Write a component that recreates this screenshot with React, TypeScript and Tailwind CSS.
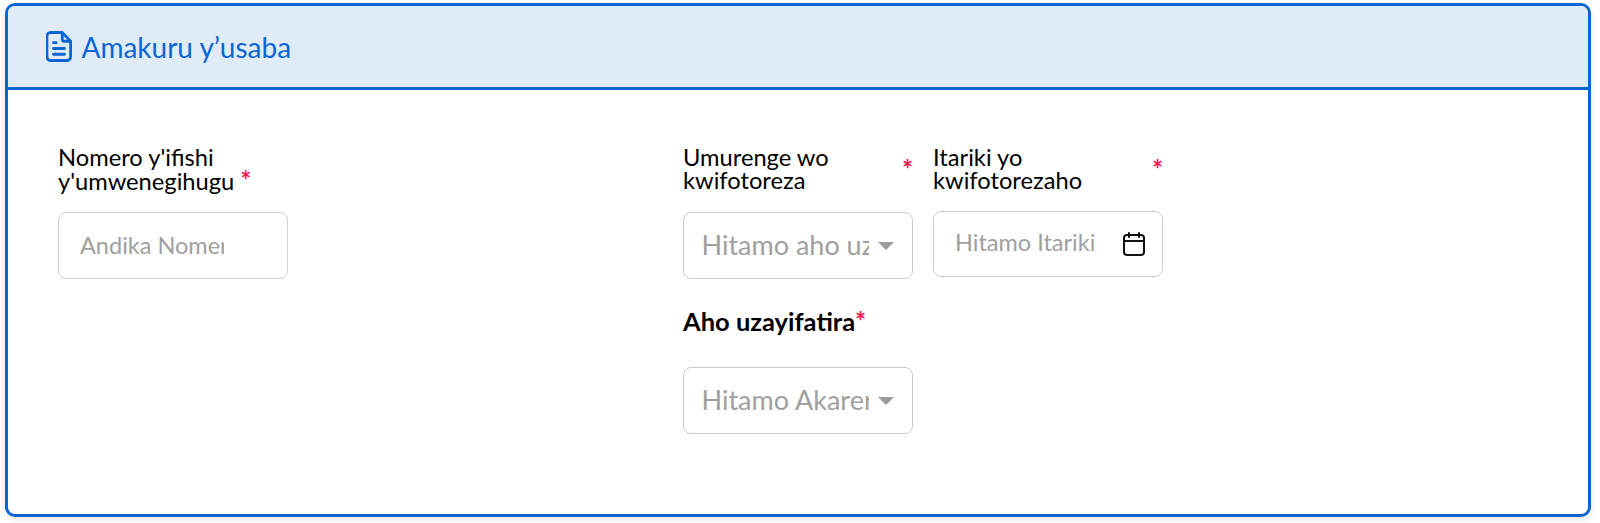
import React from "react";

function Star({ className = "" }: { className?: string }) {
  return <span className={"font-bold text-[#f5174f] text-[26px] leading-[23px] " + className}>*</span>;
}

function Caret() {
  return (
    <svg width="16" height="8" viewBox="0 0 16 8" className="absolute right-[18px] top-[29px]" aria-hidden>
      <path d="M0 0h16L8 8z" fill="#9b9b9b" />
    </svg>
  );
}

function Select({ placeholder }: { placeholder: string }) {
  return (
    <div className="relative h-[67px] w-[230px] rounded-[8px] border-[1.5px] border-[#cbcbce] bg-white">
      <input
        readOnly
        placeholder={placeholder}
        className="h-full w-full rounded-[8px] bg-transparent pb-[2px] pl-[17.500px] pr-[43px] text-[27px] text-[#333] outline-none placeholder:text-[#a0a0a0]"
      />
      <Caret />
    </div>
  );
}

export default function App() {
  return (
    <div className="h-[523px] w-[1600px] bg-white pl-[5px] pt-[3px] font-['Lato',sans-serif]">
      <section className="h-[514px] w-[1586px] overflow-hidden rounded-[10px] border-[3px] border-[#0b66d4] bg-white shadow-[0_2px_6px_rgba(0,0,0,0.12)]">
        <header className="flex h-[84px] items-center gap-[10px] border-b-[3px] border-[#0b66d4] bg-[#dfecf8] pl-[37.500px]">
          <svg width="26" height="31" viewBox="0 0 28 32" preserveAspectRatio="none" fill="none" stroke="#0b66d4" strokeWidth="3" strokeLinejoin="round" strokeLinecap="round" aria-hidden>
            <path d="M5 1.5h12.5L26.500 10.500V26.500a4 4 0 0 1-4 4H5a4 4 0 0 1-4-4v-21a4 4 0 0 1 4-4z" />
            <path d="M17.500 2v6.500a2 2 0 0 0 2 2H26" />
            <path d="M8 12h3M8 18h12M8 24h12" />
          </svg>
          <h1 className="text-[28px] leading-none text-[#0b66d4]">Amakuru y’usaba</h1>
        </header>
        <div className="flex pl-[50px] pt-[56px]">
          <div className="w-[230px]">
            <label className="block h-[66px] text-[23.700px] leading-[23px] text-black">
              Nomero y'ifishi<br />y'umwenegihugu <Star />
            </label>
            <input
              readOnly
              placeholder="Andika Nomero"
              className="h-[67px] w-full rounded-[8px] border-[1.5px] border-[#cbd0da] bg-white pb-[2px] pl-[21px] pr-[63px] text-[23.500px] outline-none placeholder:text-[#a0a0a0]"
            />
          </div>
          <div className="ml-[395px] w-[230px]">
            <label className="flex h-[66px] justify-between text-[23.700px] leading-[23px] text-black">
              <span>Umurenge wo<br />kwifotoreza</span>
              <Star className="mt-[12px]" />
            </label>
            <Select placeholder="Hitamo aho uzayifatira" />
            <div className="mt-[27px] h-[61px] text-[25.500px] font-bold leading-[30px] text-black">
              Aho uzayifatira<Star />
            </div>
            <Select placeholder="Hitamo Akarere" />
          </div>
          <div className="ml-[20px] w-[230px]">
            <label className="flex h-[65px] justify-between text-[23.700px] leading-[23px] text-black">
              <span>Itariki yo<br />kwifotorezaho</span>
              <Star className="mt-[12px]" />
            </label>
            <div className="flex h-[66px] items-center rounded-[8px] border-[1.5px] border-[#cbd0da] bg-white pl-[21px] pr-[17px]">
              <span className="flex-1 pb-[2px] text-[23.500px] text-[#a0a0a0]">Hitamo Itariki</span>
              <svg width="22" height="24" viewBox="0 0 22 24" fill="none" stroke="#111" strokeWidth="2" strokeLinecap="round" strokeLinejoin="round" aria-hidden>
                <rect x="1" y="3" width="20" height="20" rx="3" />
                <path d="M6 1v4M16 1v4M1 9h20" />
              </svg>
            </div>
          </div>
        </div>
      </section>
    </div>
  );
}
